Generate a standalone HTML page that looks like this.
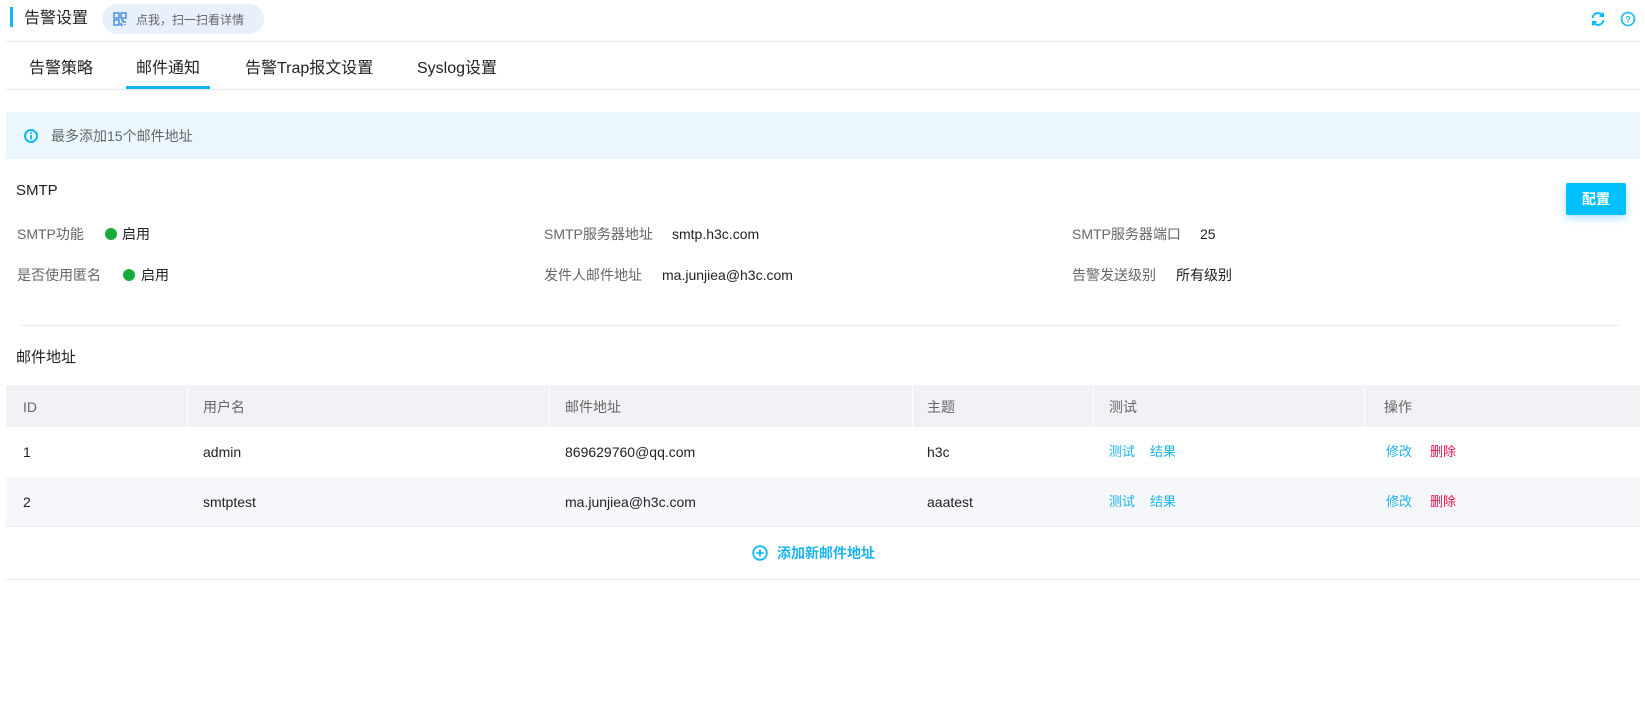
<!DOCTYPE html>
<html><head><meta charset="utf-8"><style>
*{margin:0;padding:0;box-sizing:border-box}
body{width:1645px;height:722px;background:#fff;font-family:"Liberation Sans","Noto Sans CJK SC",sans-serif;color:#222;position:relative;overflow:hidden;font-size:14px}
.a{position:absolute;white-space:nowrap;line-height:20px}
.lbl{color:#666}
.hr{position:absolute;height:1px;background:#e8e8ee}
.th{color:#666}
.bl{color:#1ab4ee}
.rd{color:#f0104a}
.dot{position:absolute;width:12px;height:12px;border-radius:50%;background:#1aaa3c}
</style></head><body>
<div class="a" style="left:10px;top:7px;width:3px;height:20px;background:#12b8f5"></div>
<div class="a" style="left:24px;top:8px;font-size:16px;line-height:22px;color:#222">告警设置</div>
<div class="a" style="left:102px;top:4px;width:162px;height:30px;border-radius:15px;background:#e8f0fc"></div>
<svg class="a" style="left:113px;top:12px" width="14" height="14" viewBox="0 0 14 14" fill="none" stroke="#4a90e2" stroke-width="1.5"><rect x="1" y="1" width="5" height="5"/><rect x="8" y="1" width="5" height="5"/><rect x="1" y="8" width="5" height="5"/><path d="M8 8h2v2h3M8 11v2h2M12 12v1"/></svg>
<div class="a" style="left:136px;top:10px;font-size:12px;color:#666">点我，扫一扫看详情</div>
<svg class="a" style="left:1590px;top:11px" width="16" height="16" viewBox="0 0 16 16" fill="none" stroke="#12b8f5" stroke-width="2"><path d="M2.5 7a5.5 5.5 0 0 1 10-2.5"/><path d="M13.5 9a5.5 5.5 0 0 1-10 2.5"/><path d="M13 1.5v3.5h-3.5" /><path d="M3 14.5v-3.5h3.5"/></svg>
<svg class="a" style="left:1620px;top:11px" width="16" height="16" viewBox="0 0 16 16" fill="none" stroke="#12b8f5" stroke-width="1.6"><circle cx="8" cy="8" r="6.5"/><text x="8" y="11.5" font-size="9" text-anchor="middle" fill="#12b8f5" stroke="none" font-family="Liberation Sans" font-weight="bold">?</text></svg>
<div class="hr" style="left:6px;top:41px;width:1634px"></div>
<div class="a" style="left:29px;top:58px;font-size:16px;line-height:22px">告警策略</div>
<div class="a" style="left:136px;top:58px;font-size:16px;line-height:22px">邮件通知</div>
<div class="a" style="left:245px;top:58px;font-size:16px;line-height:22px">告警Trap报文设置</div>
<div class="a" style="left:417px;top:58px;font-size:16px;line-height:22px">Syslog设置</div>
<div class="hr" style="left:6px;top:89px;width:1634px"></div>
<div class="a" style="left:126px;top:86px;width:84px;height:3px;background:#12b8f5"></div>
<div class="a" style="left:6px;top:112px;width:1634px;height:47px;background:#eaf8fe"></div>
<svg class="a" style="left:24px;top:129px" width="14" height="14" viewBox="0 0 14 14"><circle cx="7" cy="7" r="6" fill="none" stroke="#12b8f5" stroke-width="2"/><rect x="6.2" y="6" width="1.8" height="4.5" fill="#12b8f5"/><rect x="6.2" y="3.3" width="1.8" height="1.7" fill="#12b8f5"/></svg>
<div class="a lbl" style="left:51px;top:126px;font-size:14px">最多添加15个邮件地址</div>
<div class="a" style="left:16px;top:181px;font-size:15px">SMTP</div>
<div class="a" style="left:1566px;top:183px;width:60px;height:32px;background:#00bfff;border-radius:2px;color:#fff;font-size:14px;font-weight:bold;text-align:center;line-height:32px;box-shadow:0 3px 8px rgba(0,170,255,.35)">配置</div>
<div class="a lbl" style="left:17px;top:224px">SMTP功能</div>
<div class="dot" style="left:105px;top:228px"></div>
<div class="a" style="left:122px;top:224px">启用</div>
<div class="a lbl" style="left:544px;top:224px">SMTP服务器地址</div>
<div class="a" style="left:672px;top:224px">smtp.h3c.com</div>
<div class="a lbl" style="left:1072px;top:224px">SMTP服务器端口</div>
<div class="a" style="left:1200px;top:224px">25</div>
<div class="a lbl" style="left:17px;top:265px">是否使用匿名</div>
<div class="dot" style="left:123px;top:269px"></div>
<div class="a" style="left:141px;top:265px">启用</div>
<div class="a lbl" style="left:544px;top:265px">发件人邮件地址</div>
<div class="a" style="left:662px;top:265px">ma.junjiea@h3c.com</div>
<div class="a lbl" style="left:1072px;top:265px">告警发送级别</div>
<div class="a" style="left:1176px;top:265px">所有级别</div>
<div class="hr" style="left:21px;top:325px;width:1598px"></div>
<div class="a" style="left:16px;top:348px;font-size:15px">邮件地址</div>
<div class="a" style="left:6px;top:386px;width:1634px;height:41px;background:#f1f2f5;border-top:1px solid #e8e8f0"></div>
<div class="a" style="left:187px;top:386px;width:1px;height:41px;background:#fff"></div>
<div class="a" style="left:549px;top:386px;width:1px;height:41px;background:#fff"></div>
<div class="a" style="left:912px;top:386px;width:1px;height:41px;background:#fff"></div>
<div class="a" style="left:1093px;top:386px;width:1px;height:41px;background:#fff"></div>
<div class="a" style="left:1364px;top:386px;width:1px;height:41px;background:#fff"></div>
<div class="a th" style="left:23px;top:397px">ID</div>
<div class="a th" style="left:203px;top:397px">用户名</div>
<div class="a th" style="left:565px;top:397px">邮件地址</div>
<div class="a th" style="left:927px;top:397px">主题</div>
<div class="a th" style="left:1109px;top:397px">测试</div>
<div class="a th" style="left:1384px;top:397px">操作</div>
<div class="a" style="left:23px;top:442px">1</div>
<div class="a" style="left:203px;top:442px">admin</div>
<div class="a" style="left:565px;top:442px">869629760@qq.com</div>
<div class="a" style="left:927px;top:442px">h3c</div>
<div class="a bl" style="left:1109px;top:442px;font-size:13px">测试</div>
<div class="a bl" style="left:1150px;top:442px;font-size:13px">结果</div>
<div class="a bl" style="left:1386px;top:442px;font-size:13px">修改</div>
<div class="a rd" style="left:1430px;top:442px;font-size:13px">删除</div>
<div class="a" style="left:6px;top:477px;width:1634px;height:50px;background:#f5f7fa;border-bottom:1px solid #e8e8f0"></div>
<div class="a" style="left:23px;top:492px">2</div>
<div class="a" style="left:203px;top:492px">smtptest</div>
<div class="a" style="left:565px;top:492px">ma.junjiea@h3c.com</div>
<div class="a" style="left:927px;top:492px">aaatest</div>
<div class="a bl" style="left:1109px;top:492px;font-size:13px">测试</div>
<div class="a bl" style="left:1150px;top:492px;font-size:13px">结果</div>
<div class="a bl" style="left:1386px;top:492px;font-size:13px">修改</div>
<div class="a rd" style="left:1430px;top:492px;font-size:13px">删除</div>
<svg class="a" style="left:752px;top:545px" width="16" height="16" viewBox="0 0 16 16" fill="none" stroke="#12b8f5" stroke-width="1.8"><circle cx="8" cy="8" r="6.8"/><path d="M8 4.5v7M4.5 8h7"/></svg>
<div class="a bl" style="left:777px;top:543px;font-weight:bold;font-size:14px">添加新邮件地址</div>
<div class="hr" style="left:6px;top:579px;width:1634px"></div>
</body></html>
